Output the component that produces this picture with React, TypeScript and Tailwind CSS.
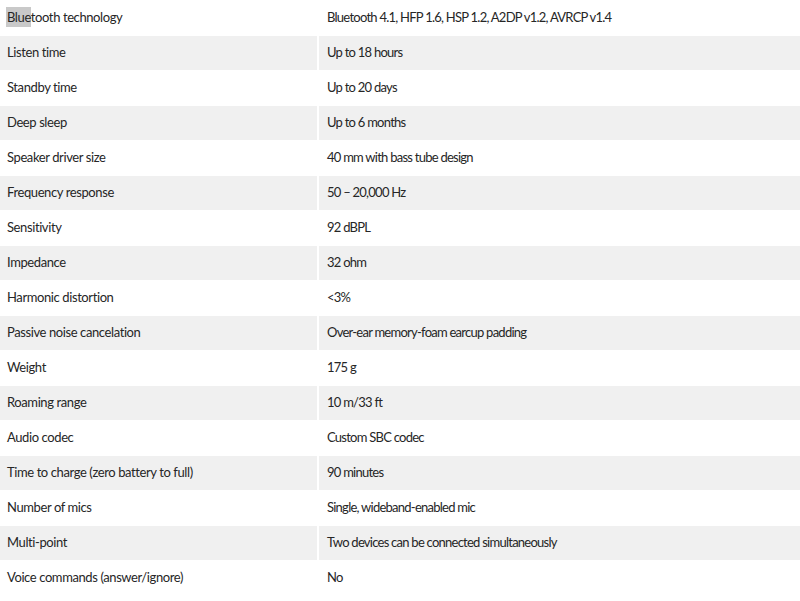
const specs: [string, string][] = [
  ['Bluetooth technology', 'Bluetooth 4.1, HFP 1.6, HSP 1.2, A2DP v1.2, AVRCP v1.4'],
  ['Listen time', 'Up to 18 hours'],
  ['Standby time', 'Up to 20 days'],
  ['Deep sleep', 'Up to 6 months'],
  ['Speaker driver size', '40 mm with bass tube design'],
  ['Frequency response', '50 – 20,000 Hz'],
  ['Sensitivity', '92 dBPL'],
  ['Impedance', '32 ohm'],
  ['Harmonic distortion', '<3%'],
  ['Passive noise cancelation', 'Over-ear memory-foam earcup padding'],
  ['Weight', '175 g'],
  ['Roaming range', '10 m/33 ft'],
  ['Audio codec', 'Custom SBC codec'],
  ['Time to charge (zero battery to full)', '90 minutes'],
  ['Number of mics', 'Single, wideband-enabled mic'],
  ['Multi-point', 'Two devices can be connected simultaneously'],
  ['Voice commands (answer/ignore)', 'No'],
];

export default function App() {
  return (
    <div className="w-[800px] h-[601px] overflow-hidden bg-white font-['Lato',sans-serif] text-[13px] text-[#262626]">
      {specs.map(([label, value], i) => {
        const striped = i % 2 === 1;
        return (
          <div
            key={label}
            className={
              striped
                ? 'flex h-[35px] border-t border-white bg-[#f0f0f0]'
                : 'flex h-[35px] border-t border-white'
            }
          >
            <div className="w-[319px] flex items-center pl-[7px] border-r-2 border-white tracking-[-0.4px]">
              {i === 0 ? (
                <span>
                  {/* text selection left over in the screenshot */}
                  <span className="bg-[#c9c9c9] py-[2px] pl-[1px] -ml-[1px]">Blue</span>tooth technology
                </span>
              ) : (
                label
              )}
            </div>
            <div className="flex-1 flex items-center pl-[8px] mr-[1px] tracking-[-0.75px]">{value}</div>
          </div>
        );
      })}
    </div>
  );
}
